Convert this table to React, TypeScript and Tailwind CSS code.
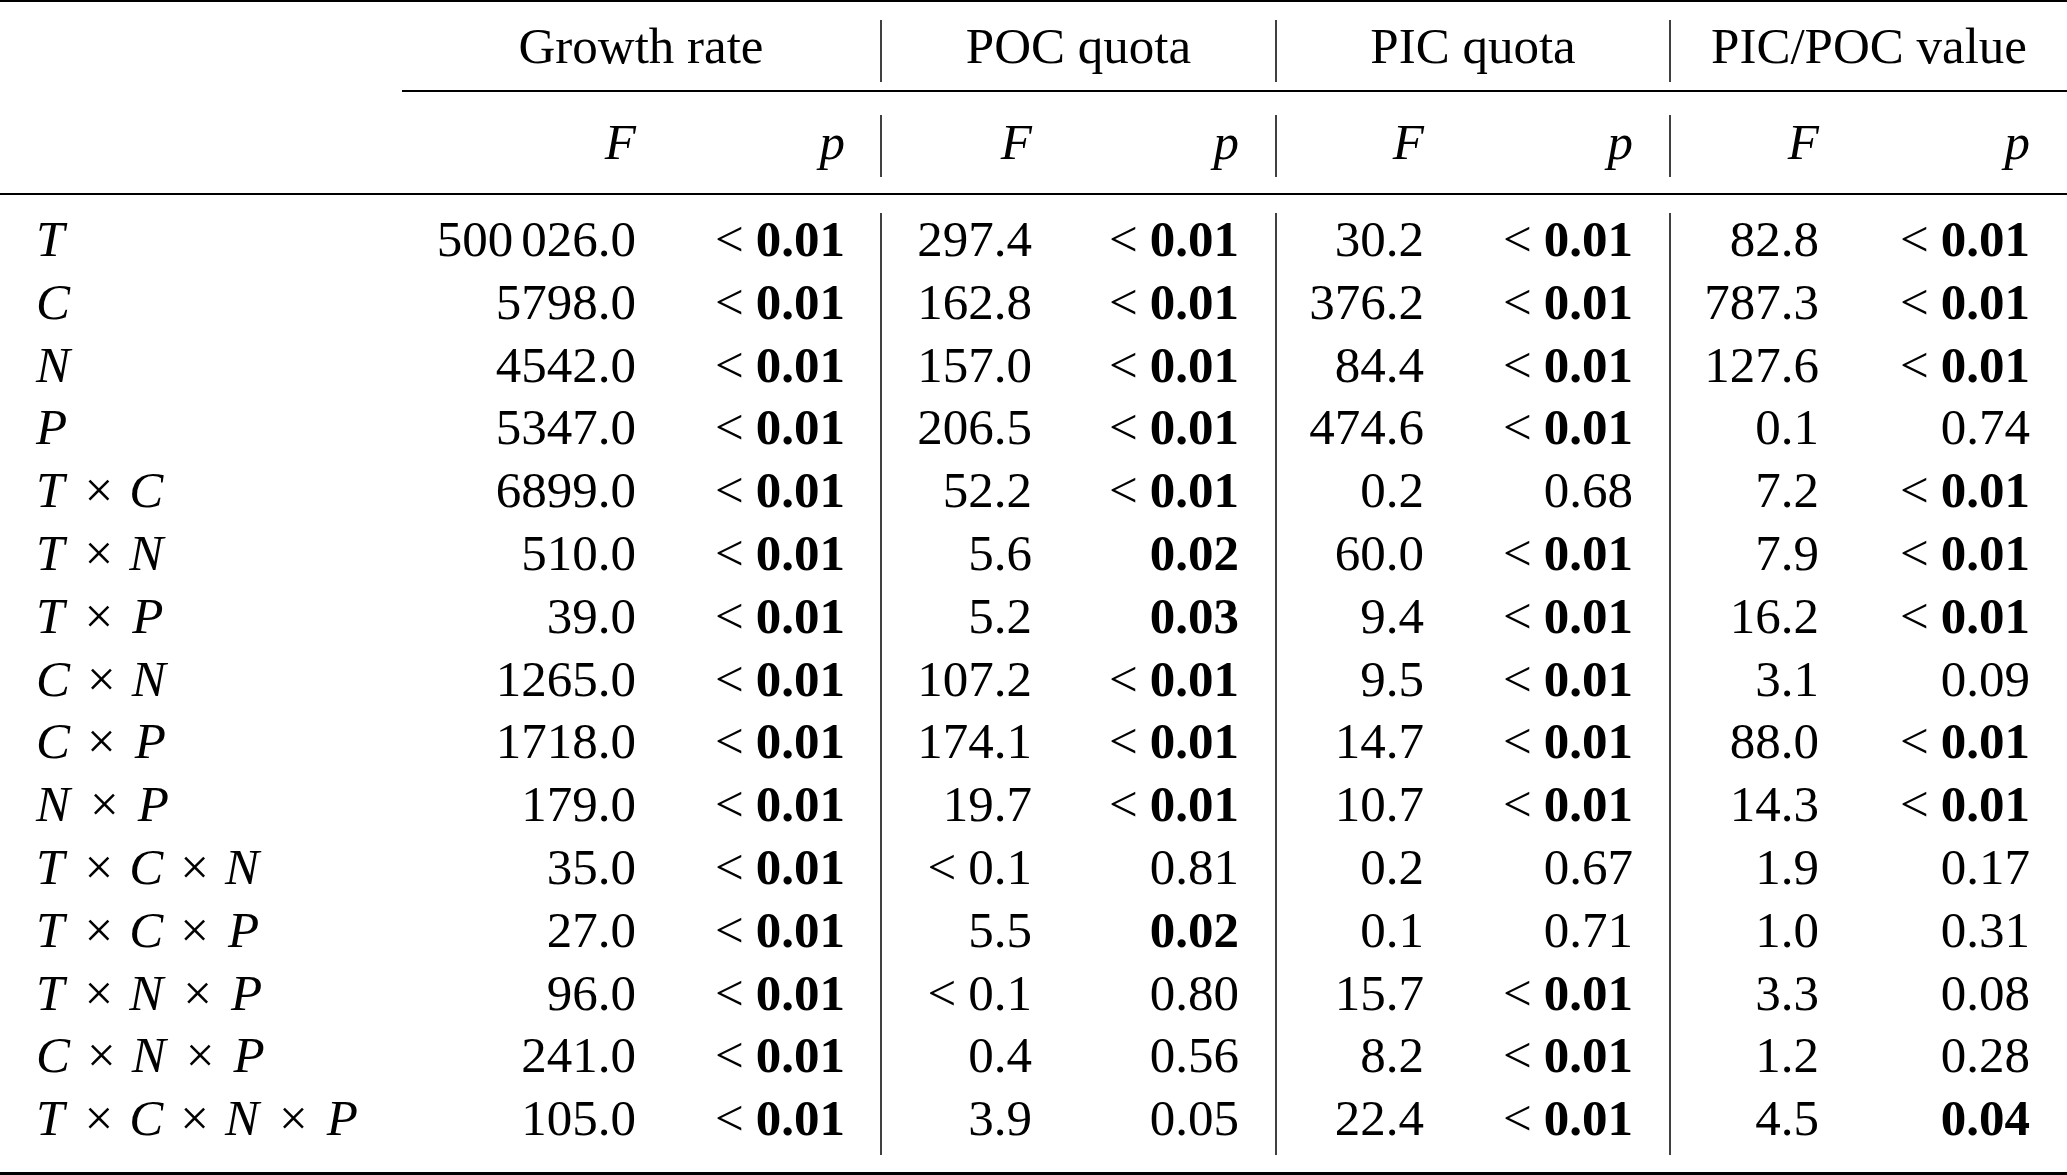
import React from "react";

const COLS =
  "grid grid-cols-[402px_258px_222px_197px_198px_192px_202px_188px_208px]";

const F_PAD = ["pr-[24px]", "pr-[47px]", "pr-[45px]", "pr-[40px]"];
const P_PAD = [
  "pr-[35px] border-r-2 border-[#404040]",
  "pr-[36px] border-r-2 border-[#404040]",
  "pr-[36px] border-r-2 border-[#404040]",
  "pr-[37px]",
];

const LETTER_PAD: Record<string, string> = {
  T: "italic pr-[4px]",
  C: "italic pr-[1px]",
  N: "italic pr-[4px]",
  P: "italic pl-[3px]",
};

type Row = { label: string[]; vals: string[] };

const rows: Row[] = [
  { label: ["T"], vals: ["500 026.0", "<0.01", "297.4", "<0.01", "30.2", "<0.01", "82.8", "<0.01"] },
  { label: ["C"], vals: ["5798.0", "<0.01", "162.8", "<0.01", "376.2", "<0.01", "787.3", "<0.01"] },
  { label: ["N"], vals: ["4542.0", "<0.01", "157.0", "<0.01", "84.4", "<0.01", "127.6", "<0.01"] },
  { label: ["P"], vals: ["5347.0", "<0.01", "206.5", "<0.01", "474.6", "<0.01", "0.1", "0.74"] },
  { label: ["T", "C"], vals: ["6899.0", "<0.01", "52.2", "<0.01", "0.2", "0.68", "7.2", "<0.01"] },
  { label: ["T", "N"], vals: ["510.0", "<0.01", "5.6", "b0.02", "60.0", "<0.01", "7.9", "<0.01"] },
  { label: ["T", "P"], vals: ["39.0", "<0.01", "5.2", "b0.03", "9.4", "<0.01", "16.2", "<0.01"] },
  { label: ["C", "N"], vals: ["1265.0", "<0.01", "107.2", "<0.01", "9.5", "<0.01", "3.1", "0.09"] },
  { label: ["C", "P"], vals: ["1718.0", "<0.01", "174.1", "<0.01", "14.7", "<0.01", "88.0", "<0.01"] },
  { label: ["N", "P"], vals: ["179.0", "<0.01", "19.7", "<0.01", "10.7", "<0.01", "14.3", "<0.01"] },
  { label: ["T", "C", "N"], vals: ["35.0", "<0.01", "<0.1", "0.81", "0.2", "0.67", "1.9", "0.17"] },
  { label: ["T", "C", "P"], vals: ["27.0", "<0.01", "5.5", "b0.02", "0.1", "0.71", "1.0", "0.31"] },
  { label: ["T", "N", "P"], vals: ["96.0", "<0.01", "<0.1", "0.80", "15.7", "<0.01", "3.3", "0.08"] },
  { label: ["C", "N", "P"], vals: ["241.0", "<0.01", "0.4", "0.56", "8.2", "<0.01", "1.2", "0.28"] },
  { label: ["T", "C", "N", "P"], vals: ["105.0", "<0.01", "3.9", "0.05", "22.4", "<0.01", "4.5", "b0.04"] },
];

function Value({ v, isP }: { v: string; isP: boolean }) {
  if (v.startsWith("<")) {
    const num = v.slice(1);
    return (
      <span>
        <span>&lt;</span>
        <span className={isP ? "ml-[12px] font-bold" : "ml-[12px]"}>{num}</span>
      </span>
    );
  }
  if (v.startsWith("b")) {
    return <span className="font-bold">{v.slice(1)}</span>;
  }
  if (v.includes(" ")) {
    const [a, b] = v.split(" ");
    return (
      <span>
        {a}
        <span className="ml-[8px]">{b}</span>
      </span>
    );
  }
  return <span>{v}</span>;
}

function Label({ parts }: { parts: string[] }) {
  return (
    <span className="whitespace-nowrap">
      {parts.map((p, i) => (
        <React.Fragment key={i}>
          {i > 0 && <span className="mx-[16px] not-italic">×</span>}
          <span className={parts.length > 1 ? LETTER_PAD[p] : "italic"}>{p}</span>
        </React.Fragment>
      ))}
    </span>
  );
}

export default function App() {
  const groups = ["Growth rate", "POC quota", "PIC quota", "PIC/POC value"];
  return (
    <div className="w-[2067px] h-[1175px] bg-white text-black font-['Liberation_Serif',serif] text-[51px] overflow-hidden">
      {/* top rule */}
      <div className="h-[2px] bg-black" />

      {/* header row 1 */}
      <div className={`${COLS} mt-[18px]`}>
        <div className="h-[62px]" />
        {groups.map((g, i) => (
          <div
            key={g}
            className={`col-span-2 h-[62px] leading-[52px] text-center whitespace-nowrap ${
              i < 3 ? "border-r-2 border-[#404040]" : ""
            }`}
          >
            {g}
          </div>
        ))}
      </div>

      {/* cmidrule */}
      <div className="mt-[8px] ml-[402px] h-[2px] bg-black" />

      {/* header row 2 */}
      <div className={`${COLS} mt-[23px]`}>
        <div className="h-[62px]" />
        {[0, 1, 2, 3].map((i) => (
          <React.Fragment key={i}>
            <div className={`h-[62px] leading-[54px] text-right italic ${F_PAD[i]}`}>F</div>
            <div className={`h-[62px] leading-[54px] text-right italic ${P_PAD[i]}`}>p</div>
          </React.Fragment>
        ))}
      </div>

      {/* midrule */}
      <div className="mt-[16px] h-[2px] bg-black" />

      {/* body */}
      <div className={`${COLS} mt-[18px]`}>
        {rows.map((r, ri) => (
          <React.Fragment key={ri}>
            <div className="h-[62.8px] leading-[53.6px] pl-[36px]">
              <Label parts={r.label} />
            </div>
            {[0, 1, 2, 3].map((i) => (
              <React.Fragment key={i}>
                <div className={`h-[62.8px] leading-[53.6px] text-right whitespace-nowrap ${F_PAD[i]}`}>
                  <Value v={r.vals[i * 2]} isP={false} />
                </div>
                <div className={`h-[62.8px] leading-[53.6px] text-right whitespace-nowrap ${P_PAD[i]}`}>
                  <Value v={r.vals[i * 2 + 1]} isP={true} />
                </div>
              </React.Fragment>
            ))}
          </React.Fragment>
        ))}
      </div>

      {/* bottom rule */}
      <div className="mt-[17px] h-[3px] bg-black" />
    </div>
  );
}
